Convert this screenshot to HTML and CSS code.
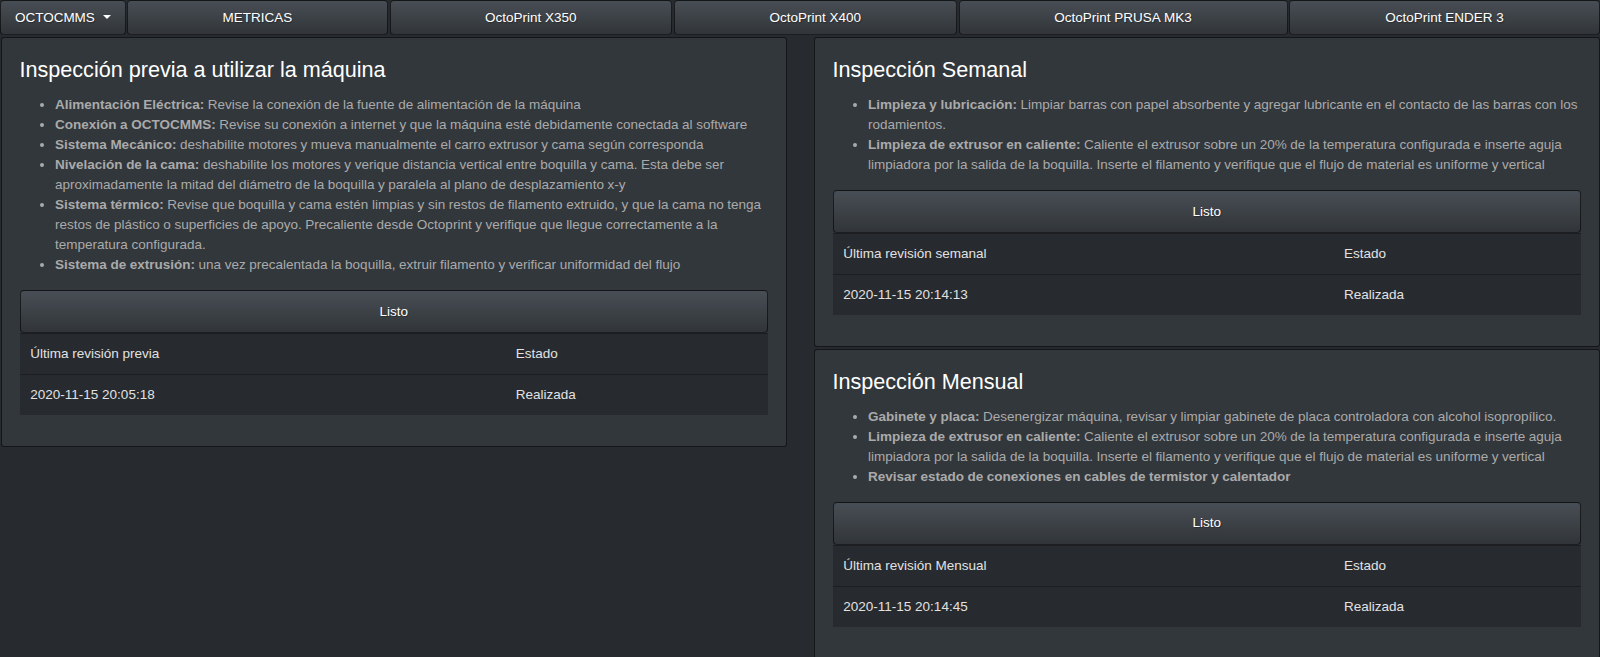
FILE: index.html
```html
<!DOCTYPE html>
<html lang="es">
<head>
<meta charset="utf-8">
<title>OCTOCMMS</title>
<link rel="stylesheet" href="styles.css">
</head>
<body>
<nav class="topnav">
  <button class="btn nav-btn">OCTOCMMS <span class="caret"></span></button>
  <button class="btn nav-btn">METRICAS</button>
  <button class="btn nav-btn">OctoPrint X350</button>
  <button class="btn nav-btn">OctoPrint X400</button>
  <button class="btn nav-btn">OctoPrint PRUSA MK3</button>
  <button class="btn nav-btn">OctoPrint ENDER 3</button>
</nav>
<main class="layout">
  <section class="col">
    <div class="card">
      <h4 class="card-title">Inspección previa a utilizar la máquina</h4>
      <ul class="checklist">
        <li><b>Alimentación Eléctrica:</b> Revise la conexión de la fuente de alimentación de la máquina</li>
        <li><b>Conexión a OCTOCMMS:</b> Revise su conexión a internet y que la máquina esté debidamente conectada al software</li>
        <li><b>Sistema Mecánico:</b> deshabilite motores y mueva manualmente el carro extrusor y cama según corresponda</li>
        <li><b>Nivelación de la cama:</b> deshabilite los motores y verique distancia vertical entre boquilla y cama. Esta debe ser aproximadamente la mitad del diámetro de la boquilla y paralela al plano de desplazamiento x-y</li>
        <li><b>Sistema térmico:</b> Revise que boquilla y cama estén limpias y sin restos de filamento extruido, y que la cama no tenga restos de plástico o superficies de apoyo. Precaliente desde Octoprint y verifique que llegue correctamente a la temperatura configurada.</li>
        <li><b>Sistema de extrusión:</b> una vez precalentada la boquilla, extruir filamento y verificar uniformidad del flujo</li>
      </ul>
      <button class="btn btn-block">Listo</button>
      <table class="table">
        <tr><td>Última revisión previa</td><td>Estado</td></tr>
        <tr><td>2020-11-15 20:05:18</td><td>Realizada</td></tr>
      </table>
    </div>
  </section>
  <section class="col">
    <div class="card">
      <h4 class="card-title">Inspección Semanal</h4>
      <ul class="checklist">
        <li><b>Limpieza y lubricación:</b> Limpiar barras con papel absorbente y agregar lubricante en el contacto de las barras con los rodamientos.</li>
        <li><b>Limpieza de extrusor en caliente:</b> Caliente el extrusor sobre un 20% de la temperatura configurada e inserte aguja limpiadora por la salida de la boquilla. Inserte el filamento y verifique que el flujo de material es uniforme y vertical</li>
      </ul>
      <button class="btn btn-block">Listo</button>
      <table class="table">
        <tr><td>Última revisión semanal</td><td>Estado</td></tr>
        <tr><td>2020-11-15 20:14:13</td><td>Realizada</td></tr>
      </table>
    </div>
    <div class="card">
      <h4 class="card-title">Inspección Mensual</h4>
      <ul class="checklist">
        <li><b>Gabinete y placa:</b> Desenergizar máquina, revisar y limpiar gabinete de placa controladora con alcohol isopropílico.</li>
        <li><b>Limpieza de extrusor en caliente:</b> Caliente el extrusor sobre un 20% de la temperatura configurada e inserte aguja limpiadora por la salida de la boquilla. Inserte el filamento y verifique que el flujo de material es uniforme y vertical</li>
        <li><b>Revisar estado de conexiones en cables de termistor y calentador</b></li>
      </ul>
      <button class="btn btn-block">Listo</button>
      <table class="table">
        <tr><td>Última revisión Mensual</td><td>Estado</td></tr>
        <tr><td>2020-11-15 20:14:45</td><td>Realizada</td></tr>
      </table>
    </div>
  </section>
</main>
</body>
</html>
```

FILE: styles.css
```css
* { box-sizing: border-box; }

html, body {
  margin: 0;
  padding: 0;
}

body {
  background: #272b30;
  color: #aaaaaa;
  font-family: "Liberation Sans", Arial, sans-serif;
  font-size: 13.5px;
  line-height: 20px;
  overflow: hidden;
  height: 657px;
}

.btn {
  font-family: "Liberation Sans", Arial, sans-serif;
  font-size: 13.5px;
  line-height: 20px;
  color: #ffffff;
  text-shadow: 1px 1px 1px rgba(0, 0, 0, 0.3);
  background-color: #3a3f44;
  background-image: linear-gradient(#484e55, #3a3f44 60%, #313539);
  border: 1px solid rgba(0, 0, 0, 0.6);
  border-radius: 4px;
  cursor: pointer;
  margin: 0;
}

.topnav {
  display: grid;
  grid-template-columns: 125.5px 261px 282.5px 283.5px 329px 1fr;
  column-gap: 1.5px;
  height: 35px;
  margin-bottom: 2px;
}

.nav-btn {
  height: 35px;
  padding: 0 12px;
  text-align: center;
}

.caret {
  display: inline-block;
  width: 0;
  height: 0;
  margin-left: 4px;
  vertical-align: 3px;
  border-top: 4.5px solid #ffffff;
  border-left: 4.5px solid transparent;
  border-right: 4.5px solid transparent;
}

.layout {
  display: grid;
  grid-template-columns: 786px 786px;
  column-gap: 27px;
  padding-left: 1px;
  align-items: start;
}

.col {
  display: flex;
  flex-direction: column;
  gap: 1.5px;
}

.card {
  background: #32373c;
  border: 1px solid rgba(0, 0, 0, 0.6);
  border-radius: 3px;
  padding: 19px 18px 18px 17.5px;
}

.card-title {
  margin: 0 0 12px;
  font-size: 21.6px;
  line-height: 26px;
  font-weight: 400;
  color: #ffffff;
}

.checklist {
  margin: 0 0 15px;
  padding-left: 35.5px;
  word-spacing: -0.15px;
}

.checklist b {
  font-weight: 700;
}

.btn-block {
  display: block;
  width: 100%;
  height: 43px;
  padding: 10px 16px;
  text-align: center;
}

.table {
  width: 100%;
  border-collapse: collapse;
  margin-bottom: 13px;
  background: #272a2e;
  color: #e2e2e2;
}

.table td {
  padding: 10px 10.8px;
  line-height: 20px;
  text-align: left;
  vertical-align: top;
}

.table tr:first-child td {
  border-top: 1px solid #1c1e22;
}

.table tr + tr td {
  border-top: 1px solid #1c1e22;
}
```
